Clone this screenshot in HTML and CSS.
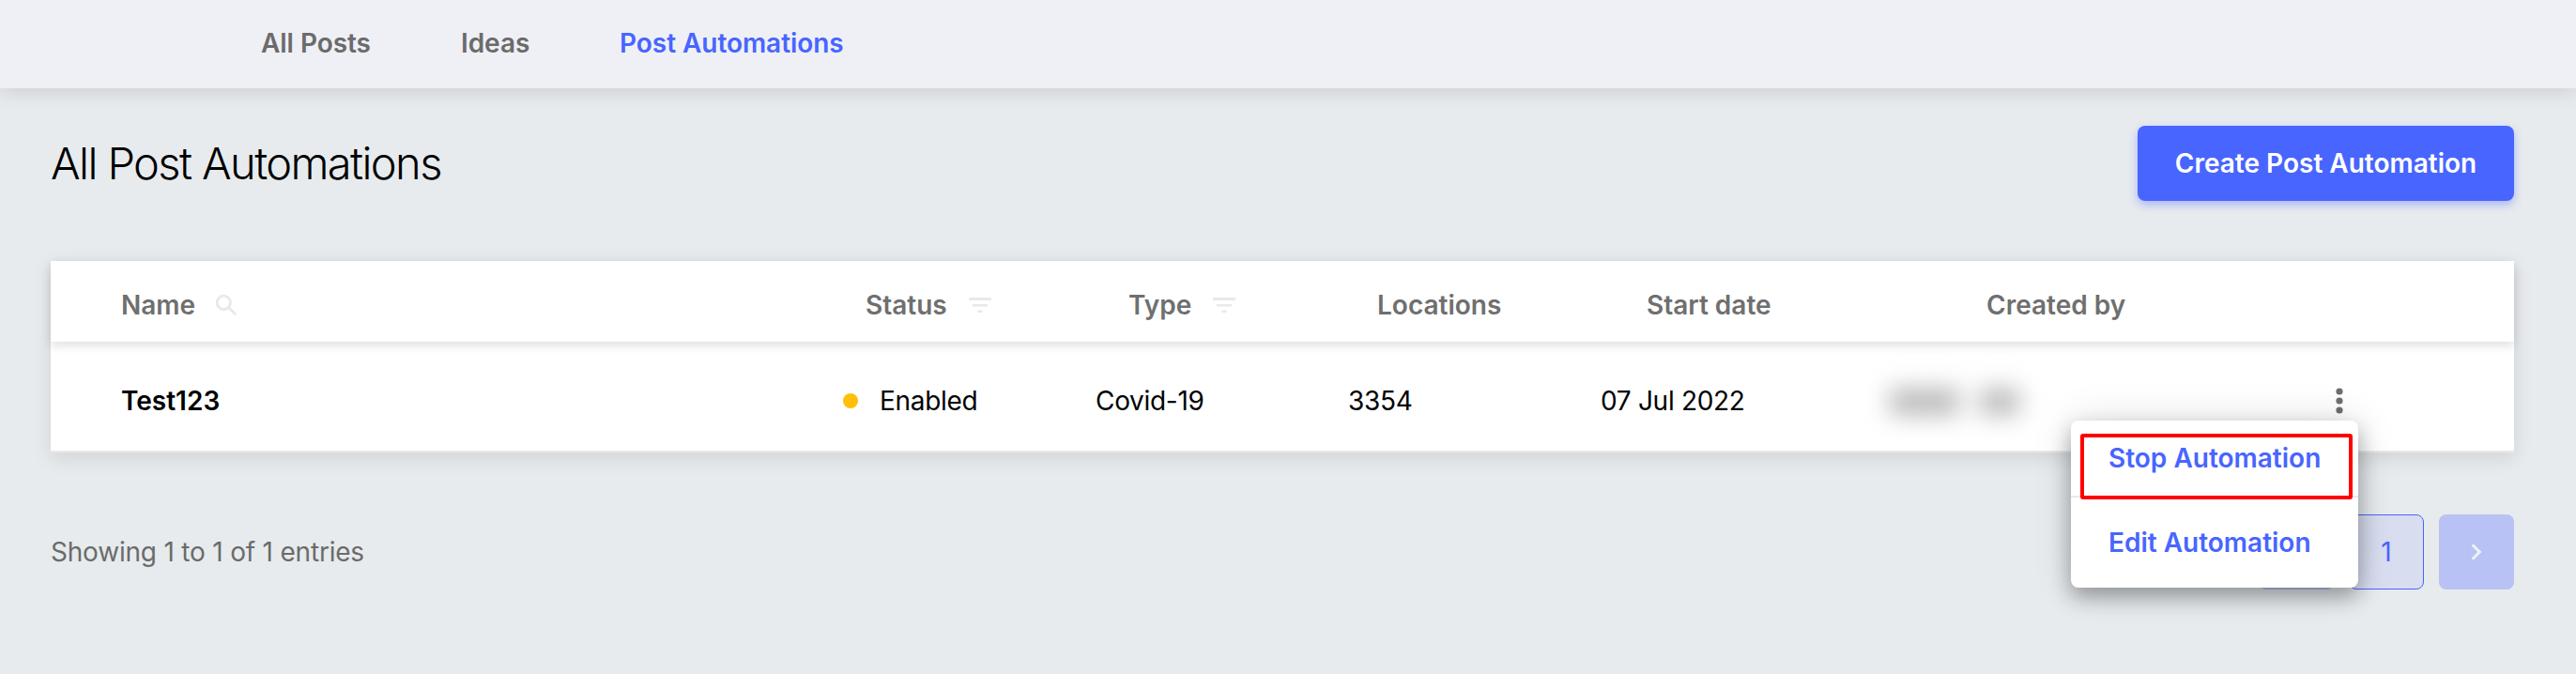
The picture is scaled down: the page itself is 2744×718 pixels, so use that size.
FILE: index.html
```html
<!DOCTYPE html>
<html lang="en">
<head>
  <meta charset="UTF-8" />
  <meta name="viewport" content="width=device-width, initial-scale=1.0" />
  <title>Post Automations</title>
  <link rel="stylesheet" href="styles.css">
</head>
<body>

  <!-- NAVBAR -->
  <nav class="navbar">
    <a href="#" class="nav-posts">All Posts</a>
    <a href="#" class="nav-ideas">Ideas</a>
    <a href="#" class="active">Post Automations</a>
  </nav>

  <main class="content">
    <div class="page-head">
      <h1>All Post Automations</h1>
      <button class="create-btn">Create Post Automation</button>
    </div>

    <!-- AUTOMATIONS TABLE -->
    <section class="table">
      <div class="table-head">
        <div class="th">
          <span>Name</span>
          <svg class="search-icon" width="24" height="24" viewBox="0 0 24 24">
            <circle cx="9.3" cy="9.3" r="7.2" />
            <path d="M14.6 14.6L22.2 22.2" />
          </svg>
        </div>
        <div class="th">
          <span>Status</span>
          <svg class="filter-icon" width="24" height="16" viewBox="0 0 24 16"><path d="M0 0h24v3H0zM4 7h16v2.5H4zM9.5 13.5h5V16h-5z" /></svg>
        </div>
        <div class="th">
          <span>Type</span>
          <svg class="filter-icon" width="24" height="16" viewBox="0 0 24 16"><path d="M0 0h24v3H0zM4 7h16v2.5H4zM9.5 13.5h5V16h-5z" /></svg>
        </div>
        <div class="th">Locations</div>
        <div class="th">Start date</div>
        <div class="th">Created by</div>
      </div>

      <div class="table-row">
        <div class="name">Test123</div>
        <div class="status"><i class="dot"></i><span>Enabled</span></div>
        <div class="type">Covid-19</div>
        <div class="locations">3354</div>
        <div class="date">07 Jul 2022</div>
        <div class="author"><i class="first"></i><i class="last"></i></div>
        <div class="actions">
          <svg class="more-icon" width="8" height="28" viewBox="0 0 8 28">
            <circle cx="4" cy="4" r="3.6" />
            <circle cx="4" cy="14" r="3.6" />
            <circle cx="4" cy="24" r="3.6" />
          </svg>
          <div class="menu">
            <a href="#" class="stop">Stop Automation</a>
            <a href="#" class="edit">Edit Automation</a>
            <div class="highlight"></div>
          </div>
        </div>
      </div>
    </section>

    <!-- PAGINATION -->
    <div class="table-foot">
      <p>Showing 1 to 1 of 1 entries</p>
      <div class="pages">
        <button class="page-btn"></button>
        <button class="page-btn current">1</button>
        <button class="page-btn">
          <svg width="12" height="18" viewBox="0 0 12 18"><path d="M1.7 1.4L9.3 9L1.7 16.6" /></svg>
        </button>
      </div>
    </div>
  </main>

</body>
</html>
```

FILE: styles.css
```css
/* Global Styles */
* { box-sizing: border-box; margin: 0; padding: 0; }

html { background-color: #e7ebee; }

body {
  min-height: 100vh;
  font-family: Inter, "Liberation Sans", sans-serif;
  font-size: 28px;
  line-height: 40px;
  letter-spacing: -0.3px;
  color: #000;
  white-space: nowrap;
}

a { text-decoration: none; }

button {
  border: none;
  font-family: inherit;
  font-size: inherit;
  line-height: inherit;
}

svg { display: block; flex: none; }

/* Navbar */
.navbar {
  display: flex;
  height: 94px;
  padding: 26px 0 0 278px;
  background-color: #eff0f6;
  box-shadow: 0 4px 20px rgba(0, 0, 0, 0.12);
}

.navbar a {
  color: #6b6b6b;
  font-weight: 600;
  letter-spacing: -0.05px;
}

.navbar .nav-posts { width: 213px; }
.navbar .nav-ideas { width: 169px; }
.navbar .active { color: #4865ff; }

.content {
  min-height: calc(100vh - 94px);
  padding: 40px 66px 0 54px;
}

.page-head {
  display: flex;
  justify-content: space-between;
  align-items: center;
  height: 80px;
}

h1 {
  font-size: 47px;
  font-weight: 300;
  line-height: 80px;
  letter-spacing: -1.6px;
}

.create-btn {
  width: 401px;
  height: 80px;
  border-radius: 8px;
  background-color: #4865ff;
  box-shadow: 0 4px 10px rgba(72, 101, 255, 0.4);
  color: #fff;
  font-weight: 600;
  letter-spacing: 0;
}

/* Table */
.table {
  margin-top: 64px;
  background-color: #fff;
  box-shadow: 0 6px 20px rgba(0, 0, 0, 0.1);
}

.table-head {
  display: grid;
  grid-template-columns: 793px 280px 265px 287px 362px 1fr;
  height: 86px;
  padding: 27px 0 0 75px;
  box-shadow: 0 4px 10px rgba(0, 0, 0, 0.13);
  color: #6f6f6f;
  font-weight: 600;
  letter-spacing: 0;
}

.th { display: flex; }

.search-icon {
  margin: 8px 0 0 21px;
  fill: none;
  stroke: #e9e9e9;
  stroke-width: 2.8;
}

.filter-icon {
  margin: 12px 0 0 23px;
  fill: #e9e9e9;
}

.table-row {
  display: grid;
  grid-template-columns: 769px 269px 269px 269px 305px 478px 1fr;
  height: 118px;
  padding: 43px 0 0 75px;
  border-bottom: 2px solid #e9e9e9;
}

.name {
  font-weight: 600;
  letter-spacing: 0;
}

.status { display: flex; }

.dot {
  width: 16px;
  height: 16px;
  margin: 12px 23px 0 0;
  border-radius: 50%;
  background-color: #ffbf0b;
}

.author {
  display: flex;
  gap: 22px;
  padding: 7px 0 0 3px;
  filter: blur(13px);
}

.author i {
  height: 28px;
  background-color: #b8b8b8;
}

.author .first { width: 74px; }
.author .last { width: 42px; }

.actions { position: relative; }

.more-icon {
  margin-top: 6px;
  fill: #6f6f6f;
}

/* Row menu */
.menu {
  position: absolute;
  top: 41px;
  left: -282px;
  width: 306px;
  height: 178px;
  border-radius: 8px;
  background-color: #fff;
  box-shadow: 0 10px 22px rgba(0, 0, 0, 0.32), 0 0 44px rgba(0, 0, 0, 0.12);
}

.menu a {
  display: block;
  padding-left: 40px;
  color: #4865ff;
  font-weight: 600;
  letter-spacing: 0;
}

.menu .stop {
  height: 82px;
  padding-top: 20px;
  border-bottom: 2px solid #e9e9e9;
}

.menu .edit { padding-top: 28px; }

.highlight {
  position: absolute;
  top: 14px;
  left: 10px;
  width: 290px;
  height: 70px;
  border: 4px solid #ff0000;
  border-radius: 3px;
}

/* Pagination */
.table-foot {
  display: flex;
  justify-content: space-between;
  align-items: center;
  margin-top: 66px;
  color: #6b6b6b;
  letter-spacing: -0.2px;
}

.pages { display: flex; gap: 16px; }

.page-btn {
  display: flex;
  justify-content: center;
  align-items: center;
  width: 80px;
  height: 80px;
  border-radius: 8px;
  background-color: #b8c2f4;
}

.page-btn.current {
  border: 1px solid #4865ff;
  background-color: #d8ddf0;
  color: #4865ff;
}

.page-btn path {
  fill: none;
  stroke: #eef1f5;
  stroke-width: 3;
}
```
